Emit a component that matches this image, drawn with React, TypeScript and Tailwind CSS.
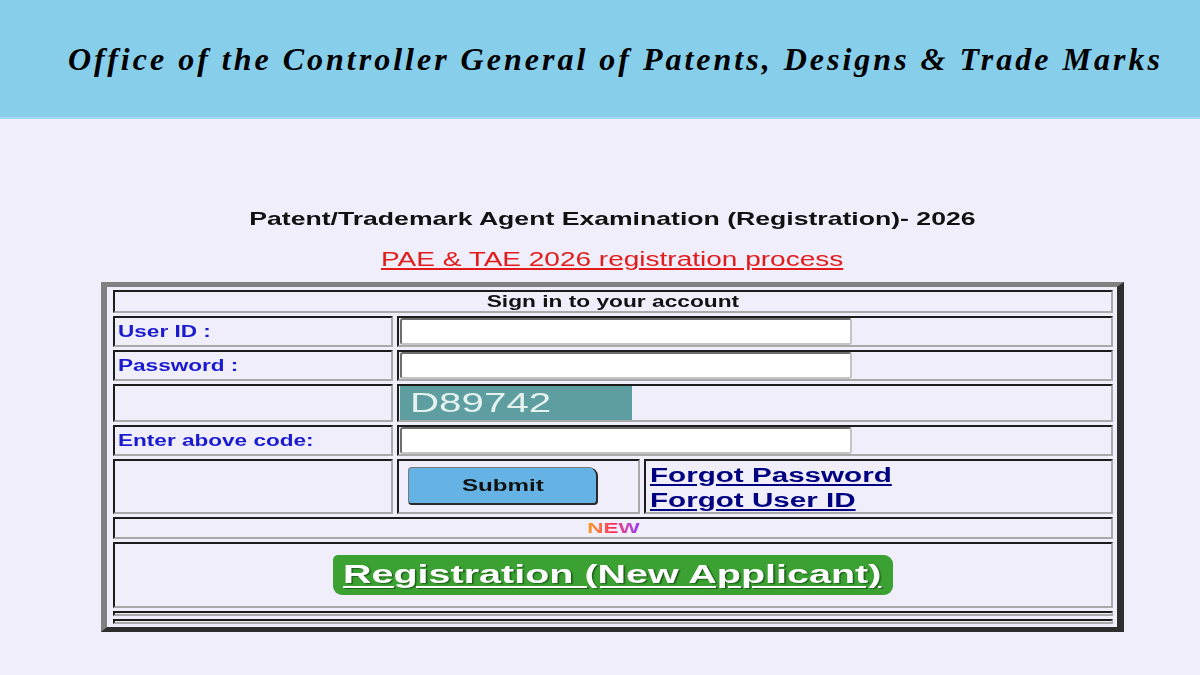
import React from 'react'

const cell =
  'border-2 border-t-[#1c1c1c] border-l-[#1c1c1c] border-r-[#a9a9a9] border-b-[#a9a9a9] bg-[#f0eefa]'

const wideLeft = 'inline-block origin-left whitespace-nowrap'
const wideMid = 'inline-block origin-center whitespace-nowrap'

function Label({ children }: { children: React.ReactNode }) {
  return (
    <div className={`${cell} pl-[3px] flex items-center`}>
      <span className={`${wideLeft} scale-x-[1.41] text-[16px] font-bold text-[#1a1ad0]`}>{children}</span>
    </div>
  )
}

function TextBox() {
  return (
    <input
      type="text"
      className="w-[452px] h-[27px] bg-white rounded-[3px] border-2 border-t-[#6e6e6e] border-l-[#6e6e6e] border-r-[#c4c4c4] border-b-[#c4c4c4] outline-none"
    />
  )
}

export default function App() {
  return (
    <div className="min-h-screen w-full bg-[#f0eefa] [font-family:'Liberation_Sans',Arial,sans-serif]">
      {/* header */}
      <header className="h-[119px] bg-[#87ceeb] border-b-2 border-[#a6d9f0] flex items-center pl-[68px]">
        <h1 className="text-[32px] font-bold italic tracking-[3px] text-black [font-family:'Liberation_Serif',serif]">
          Office of the Controller General of Patents, Designs &amp; Trade Marks
        </h1>
      </header>

      <main className="ml-[101px] w-[1023px] pt-[88px]">
        <div className="h-[24px] flex items-center justify-center">
          <h2 className={`${wideMid} scale-x-[1.4] text-[19px] font-bold text-[#111]`}>
            Patent/Trademark Agent Examination (Registration)- 2026
          </h2>
        </div>
        <div className="mt-[16px] h-[24px] flex items-center justify-center">
          <a href="#" className={`${wideMid} scale-x-[1.4] text-[20px] text-[#e21b1b] underline underline-offset-2`}>
            PAE &amp; TAE 2026 registration process
          </a>
        </div>

        {/* login table */}
        <div className="mt-[11px] border-t-[5px] border-l-[6px] border-t-[#808080] border-l-[#808080] border-r-[7px] border-b-[5px] border-r-[#2e2e2e] border-b-[#2e2e2e] pt-[3px] pb-[3px] pl-[6px] pr-[4px]">
          <div className="grid grid-cols-[280px_243px_469px] grid-rows-[23px_31px_31px_38px_31px_55px_22px_66px_5px_5px] gap-x-[4px] gap-y-[3px]">
            <div className={`${cell} col-span-3 flex items-center justify-center`}>
              <span className={`${wideMid} scale-x-[1.42] text-[16px] font-bold text-[#111]`}>Sign in to your account</span>
            </div>

            <Label>User ID :</Label>
            <div className={`${cell} col-span-2 flex items-center pl-[1px]`}>
              <TextBox />
            </div>

            <Label>Password :</Label>
            <div className={`${cell} col-span-2 flex items-center pl-[1px]`}>
              <TextBox />
            </div>

            <div className={cell} />
            <div className={`${cell} col-span-2 flex pl-[1px]`}>
              <div className="w-[232px] h-full bg-[#5f9ea0] flex items-center pl-[10px]">
                <span className={`${wideLeft} scale-x-[1.44] text-[28px] text-[#e4f1ee]`}>D89742</span>
              </div>
            </div>

            <Label>Enter above code:</Label>
            <div className={`${cell} col-span-2 flex items-center pl-[1px]`}>
              <TextBox />
            </div>

            <div className={cell} />
            <div className={`${cell} pl-[9px] pt-[6px]`}>
              <button className="w-[190px] h-[38px] bg-[#64b3e4] rounded-[4px] rounded-tr-[9px] border border-t-[#7a7a7a] border-l-[#7a7a7a] border-r-2 border-b-2 border-r-[#2a2a2a] border-b-[#2a2a2a] flex items-center justify-center">
                <span className={`${wideMid} scale-x-[1.42] text-[17px] font-bold text-[#111]`}>Submit</span>
              </button>
            </div>
            <div className={`${cell} pl-[4px] pt-[2px] flex flex-col items-start text-[20px] font-bold text-[#000080] leading-[25px]`}>
              <a href="#" className={`${wideLeft} scale-x-[1.48] underline underline-offset-2`}>Forgot Password</a>
              <a href="#" className={`${wideLeft} scale-x-[1.48] underline underline-offset-2`}>Forgot User ID</a>
            </div>

            <div className={`${cell} col-span-3 flex items-center justify-center`}>
              <span className={`${wideMid} scale-x-[1.5] text-[15px] font-bold bg-linear-to-r from-[#ff9a00] via-[#ff1f5a] to-[#9a2cff] bg-clip-text text-transparent`}>
                NEW
              </span>
            </div>

            <div className={`${cell} col-span-3 flex items-center justify-center`}>
              <a
                href="#"
                className="w-[560px] h-[40px] bg-[#3aa132] rounded-[9px] rounded-tl-[5px] flex items-center pl-[10px]"
              >
                <span className={`${wideLeft} scale-x-[1.58] text-[25px] font-bold text-white underline underline-offset-[3px] decoration-2 [text-shadow:1px_1px_1px_#1f5f1a]`}>
                  Registration (New Applicant)
                </span>
              </a>
            </div>

            <div className={`${cell} col-span-3`} />
            <div className={`${cell} col-span-3`} />
          </div>
        </div>
      </main>
    </div>
  )
}
